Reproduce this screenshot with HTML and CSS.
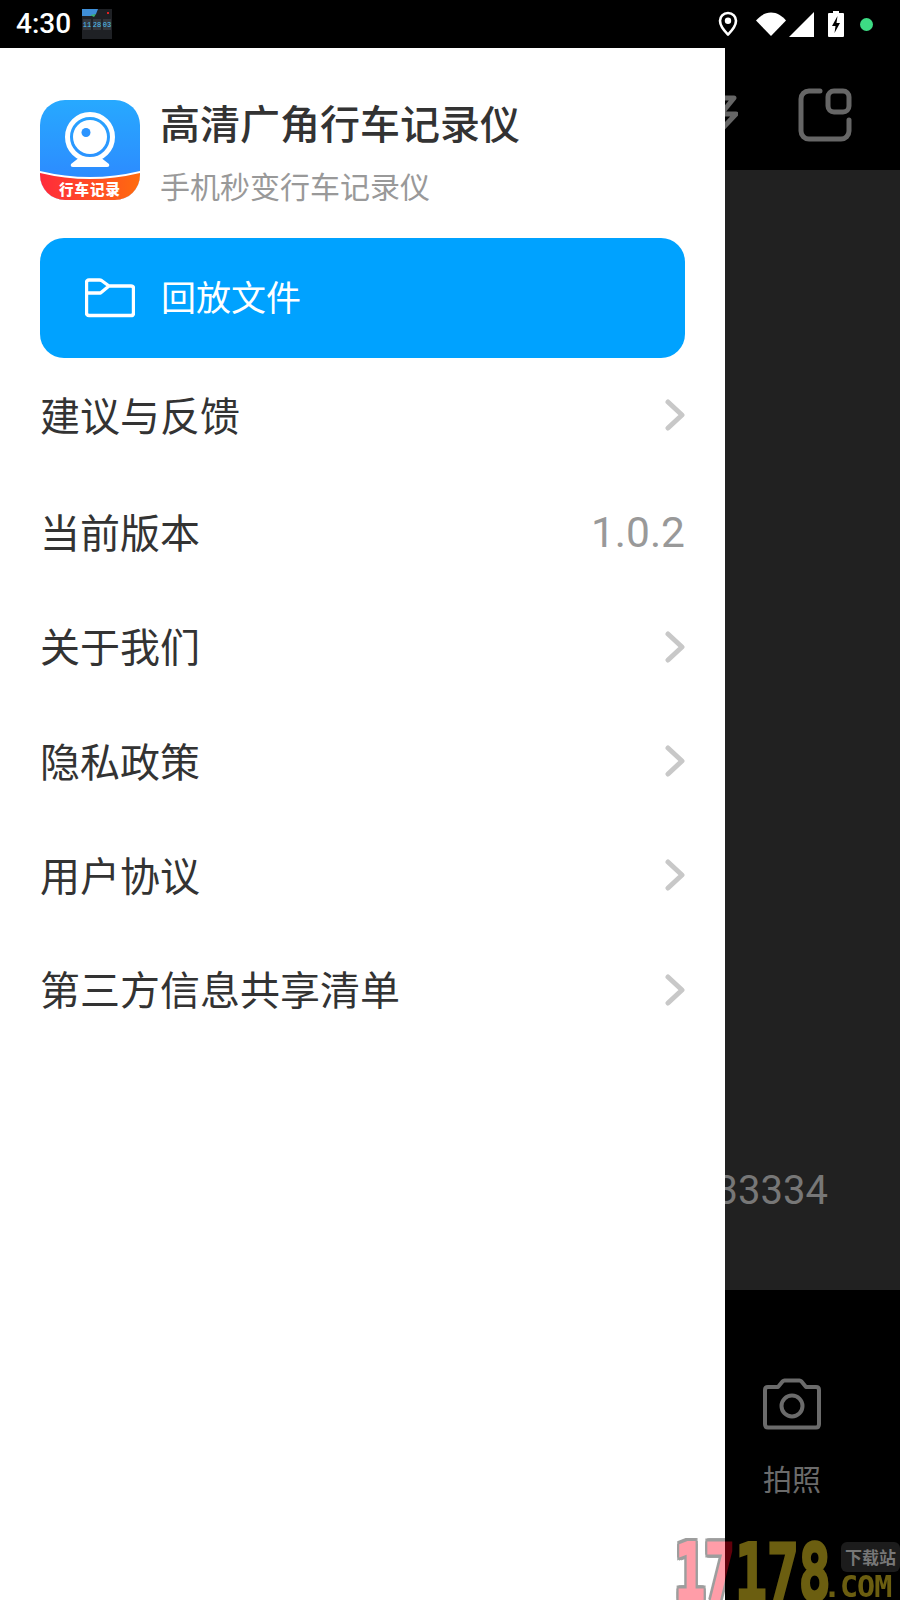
FILE: index.html
```html
<!DOCTYPE html>
<html lang="zh-CN">
<head>
<meta charset="utf-8">
<title>高清广角行车记录仪</title>
<link rel="stylesheet" href="styles.css">
</head>
<body>
<div class="app">
  <header class="status">
    <span class="clock">4:30</span>
    <svg class="thumb" viewBox="0 0 30 30" width="30" height="30">
      <rect width="30" height="30" fill="#1f2125"/>
      <path d="M0 0H16L14 5L9 7H0Z" fill="#3f8fd8"/>
      <path d="M8 6L14 5L12 8Z" fill="#3cb371"/>
      <rect x="25" y="3" width="2" height="2" fill="#e02020"/>
      <rect x="1" y="10" width="8" height="11" fill="#33363c"/>
      <rect x="11" y="10" width="8" height="11" fill="#33363c"/>
      <rect x="21" y="10" width="8" height="11" fill="#33363c"/>
      <text x="5" y="18" class="thumb-num">11</text>
      <text x="15" y="18" class="thumb-num">28</text>
      <text x="25" y="18" class="thumb-num">03</text>
    </svg>
    <div class="status-icons">
      <svg class="ic-pin" viewBox="0 0 20 26" width="20" height="26"><path d="M10 2C5.2 2 2 5.6 2 9.8C2 14.6 7 20.6 10 23.6C13 20.6 18 14.6 18 9.8C18 5.6 14.8 2 10 2Z" fill="none" stroke="#fff" stroke-width="2.6" stroke-linejoin="round"/><circle cx="10" cy="9.8" r="3.2" fill="#fff"/></svg>
      <svg class="ic-wifi" viewBox="0 0 30 24" width="30" height="24"><path d="M0 8.5C4 4 9 0.5 15 0.5C21 0.5 26 4 30 8.5L15 24Z" fill="#fff"/></svg>
      <svg class="ic-signal" viewBox="0 0 25 25" width="25" height="25"><path d="M25 0V25H0Z" fill="#fff"/></svg>
      <svg class="ic-batt" viewBox="0 0 16 26" width="16" height="26"><path d="M5 0H11V2H15A1 1 0 0 1 16 3V25A1 1 0 0 1 15 26H1A1 1 0 0 1 0 25V3A1 1 0 0 1 1 2H5Z" fill="#fff"/><path d="M9.500 5L4 15H7.500L6.500 22L12 12H8.500Z" fill="#000"/></svg>
      <span class="dot"></span>
    </div>
  </header>
  <div class="toolbar">
    <svg class="ic-bolt" viewBox="0 0 40 40" width="40" height="40"><path d="M4 3H36L23 19H38L22 36" fill="none" stroke="#666" stroke-width="5" stroke-linejoin="round"/></svg>
    <svg class="ic-frame" viewBox="0 0 54 54" width="54" height="54"><path d="M22 3H11A8 8 0 0 0 3 11V43A8 8 0 0 0 11 51H43A8 8 0 0 0 51 43V32" fill="none" stroke="#666" stroke-width="5" stroke-linecap="round"/><rect x="30" y="3" width="21" height="21" rx="6" fill="none" stroke="#666" stroke-width="5"/></svg>
  </div>
  <main class="preview"><span class="preview-num">33334</span></main>
  <footer class="bottom">
    <svg class="ic-cam" viewBox="0 0 58 52" width="58" height="52"><path d="M5 9H15L19.500 3.500C20 3 20.500 2.500 21.500 2.500H36.500C37.500 2.500 38 3 38.500 3.500L43 9H53C55 9 56 10 56 12V46C56 48.500 55 49.500 53 49.500H5C3 49.500 2 48.500 2 46V12C2 10 3 9 5 9Z" fill="none" stroke="#6b6b6b" stroke-width="4" stroke-linejoin="round"/><circle cx="29" cy="28" r="10.500" fill="none" stroke="#6b6b6b" stroke-width="4"/></svg>
    <span class="bottom-label">拍照</span>
  </footer>
</div>

<aside class="drawer">
  <div class="brand">
    <svg class="logo" viewBox="0 0 100 100" width="100" height="100">
      <defs>
        <linearGradient id="sky" x1="0" y1="0" x2="0" y2="1"><stop offset="0" stop-color="#27a9ff"/><stop offset="1" stop-color="#2e83ff"/></linearGradient>
        <linearGradient id="flame" x1="0" y1="0" x2="1" y2="0"><stop offset="0" stop-color="#ff2a3c"/><stop offset="1" stop-color="#ff6c0e"/></linearGradient>
        <clipPath id="squircle"><rect width="100" height="100" rx="25"/></clipPath>
      </defs>
      <g clip-path="url(#squircle)">
        <rect width="100" height="100" fill="url(#sky)"/>
        <path d="M0 71Q50 83 100 71V100H0Z" fill="#fff"/>
        <path d="M0 73Q50 85 100 73V100H0Z" fill="url(#flame)"/>
      </g>
      <circle cx="50" cy="37" r="22.500" fill="none" stroke="#fff" stroke-width="5"/>
      <circle cx="50" cy="37" r="17" fill="#fff"/>
      <circle cx="46" cy="32.500" r="4.500" fill="#2b94ff"/>
      <path d="M40 57Q50 62 60 57L69 64Q70 67 67 67H33Q30 67 31 64Z" fill="#fff"/>
      <text x="50" y="94.500" class="logo-text">行车记录</text>
    </svg>
    <div class="brand-text">
      <h1 class="brand-title">高清广角行车记录仪</h1>
      <p class="brand-sub">手机秒变行车记录仪</p>
    </div>
  </div>

  <div class="playback">
    <svg class="ic-folder" viewBox="0 0 50 40" width="50" height="40"><path d="M4 2H14.500C15.500 2 16 2.200 16.500 2.500L24 8H46C47.500 8 48.500 9 48.500 10.500V35C48.500 36.500 47.500 37.500 46 37.500H4C2.500 37.500 1.500 36.500 1.500 35V4.500C1.500 3 2.500 2 4 2Z M1.500 15H15.500L24 8" fill="none" stroke="#fff" stroke-width="3.400" stroke-linejoin="round"/></svg>
    <span class="playback-label">回放文件</span>
  </div>

  <ul class="menu">
    <li class="row row-first"><span class="row-label">建议与反馈</span><svg class="chev" viewBox="0 0 20 32" width="20" height="32"><path d="M3 3L17 16L3 29" fill="none" stroke="#c8c8c8" stroke-width="5" stroke-linecap="round" stroke-linejoin="round"/></svg></li>
    <li class="row"><span class="row-label">当前版本</span><span class="row-value">1.0.2</span></li>
    <li class="row"><span class="row-label">关于我们</span><svg class="chev" viewBox="0 0 20 32" width="20" height="32"><path d="M3 3L17 16L3 29" fill="none" stroke="#c8c8c8" stroke-width="5" stroke-linecap="round" stroke-linejoin="round"/></svg></li>
    <li class="row"><span class="row-label">隐私政策</span><svg class="chev" viewBox="0 0 20 32" width="20" height="32"><path d="M3 3L17 16L3 29" fill="none" stroke="#c8c8c8" stroke-width="5" stroke-linecap="round" stroke-linejoin="round"/></svg></li>
    <li class="row"><span class="row-label">用户协议</span><svg class="chev" viewBox="0 0 20 32" width="20" height="32"><path d="M3 3L17 16L3 29" fill="none" stroke="#c8c8c8" stroke-width="5" stroke-linecap="round" stroke-linejoin="round"/></svg></li>
    <li class="row"><span class="row-label">第三方信息共享清单</span><svg class="chev" viewBox="0 0 20 32" width="20" height="32"><path d="M3 3L17 16L3 29" fill="none" stroke="#c8c8c8" stroke-width="5" stroke-linecap="round" stroke-linejoin="round"/></svg></li>
  </ul>
</aside>

<div class="mark">
  <span class="mark-a">17</span><span class="mark-b">178</span>
  <span class="mark-tag">下载站</span>
  <span class="mark-com">.COM</span>
</div>
</body>
</html>
```
FILE: styles.css
```css
* { box-sizing: border-box; }
html, body { margin: 0; padding: 0; }
body {
  width: 900px;
  height: 1600px;
  overflow: hidden;
  position: relative;
  background: #000;
  font-family: "Noto Sans CJK SC", "Noto Sans", sans-serif;
}
.app { display: flex; flex-direction: column; width: 900px; height: 1600px; }

.status { height: 48px; flex: none; display: flex; align-items: center; padding-left: 16px; background: #000; }
.clock { font-family: Roboto, sans-serif; font-weight: 500; font-size: 28px; line-height: 48px; color: #fff; width: 66px; }
.thumb { display: block; }
.thumb-num { font-family: "Liberation Mono", monospace; font-size: 7px; fill: #4fc3f7; text-anchor: middle; }
.status-icons { margin-left: auto; display: flex; align-items: center; height: 48px; padding-right: 27px; }
.ic-pin { margin-right: 18px; }
.ic-wifi { margin-right: 3px; }
.ic-signal { margin-right: 14px; }
.ic-batt { margin-right: 16px; }
.dot { width: 13px; height: 13px; border-radius: 50%; background: #3ddc84; }

.toolbar { height: 122px; flex: none; display: flex; align-items: center; justify-content: flex-end; padding: 12px 48px 0 0; background: #000; }
.ic-bolt { margin-right: 60px; }

.preview { flex: 1; background: #212121; position: relative; display: flex; justify-content: flex-end; align-items: flex-end; padding: 0 72px 74px 0; }
.preview-num { font-family: Roboto, sans-serif; font-size: 40px; line-height: 50px; color: #777; }

.bottom { height: 310px; flex: none; background: #000; display: flex; flex-direction: column; align-items: center; padding: 88px 0 0 684px; }
.ic-cam { display: block; }
.bottom-label { font-size: 29px; line-height: 40px; color: #6b6b6b; margin-top: 28px; }

.drawer { position: absolute; left: 0; top: 48px; width: 725px; height: 1552px; background: #fff; padding: 52px 40px 0; }
.brand { display: flex; align-items: flex-start; height: 138px; }
.logo { display: block; flex: none; }
.logo-text { font-size: 14.500px; font-weight: 900; fill: #fff; text-anchor: middle; letter-spacing: 1px; }
.brand-text { margin-left: 20px; }
.brand-title { margin: -3px 0 0; font-size: 40px; font-weight: 500; line-height: 50px; color: #333; }
.brand-sub { margin: 18px 0 0; font-size: 30px; font-weight: 400; line-height: 40px; color: #999; }

.playback { height: 120px; border-radius: 24px; background: #00a2ff; display: flex; align-items: center; padding-left: 45px; }
.ic-folder { display: block; flex: none; }
.playback-label { margin: -4px 0 0 26px; font-size: 35px; line-height: 44px; color: #fff; }

.menu { list-style: none; margin: 0; padding: 0; }
.row { height: 114.300px; display: flex; align-items: center; justify-content: space-between; }
.row-first { margin-bottom: 3px; }
.row-label { margin-top: -3px; font-size: 40px; line-height: 50px; color: #333; }
.row-value { margin-top: 2px; font-family: Roboto, sans-serif; font-size: 42.500px; line-height: 50px; color: #999; }
.chev { display: block; flex: none; }

.mark { position: absolute; left: 675px; top: 1540px; width: 225px; height: 60px; }
.mark-a, .mark-b { position: absolute; top: 3px; font-family: "DejaVu Sans Mono", monospace; font-weight: 700; font-size: 78px; line-height: 60px; transform-origin: 0 50%; -webkit-text-stroke: 3px currentColor; }
.mark-a { left: 0; color: #ff001e; opacity: .38; transform: scaleX(.64); filter: drop-shadow(3px 0 0 #000) drop-shadow(-3px 0 0 #000) drop-shadow(0 3px 0 #000) drop-shadow(0 -3px 0 #000); }
.mark-b { left: 60px; color: #ffe128; opacity: .42; transform: scaleX(.68); }
.mark-tag { position: absolute; left: 166px; top: 2px; width: 59px; height: 30px; border-radius: 6px; background: #1c1c1c; color: #777; font-size: 17px; font-weight: 700; line-height: 30px; text-align: center; white-space: nowrap; }
.mark-com { position: absolute; left: 148px; top: 33px; font-family: "DejaVu Sans Mono", monospace; font-weight: 700; font-size: 30px; line-height: 28px; color: #ffe128; opacity: .42; white-space: nowrap; letter-spacing: -1px; }
```
